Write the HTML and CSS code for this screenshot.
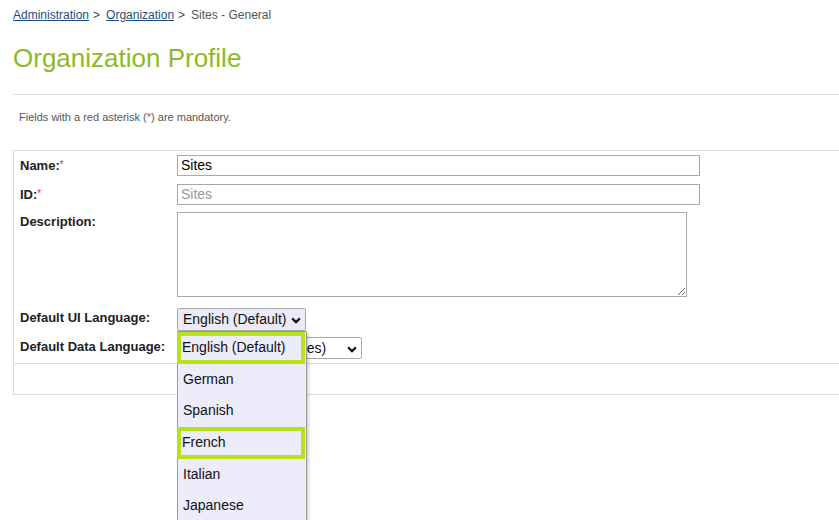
FILE: index.html
```html
<!DOCTYPE html>
<html>
<head>
<meta charset="utf-8">
<link rel="stylesheet" href="styles.css">
</head>
<body>
<div class="page">
  <div class="crumbs"><a href="#">Administration</a><span class="sep">&gt;</span><a href="#">Organization</a><span class="sep">&gt;</span><span class="cur">Sites - General</span></div>
  <h1 class="title">Organization Profile</h1>
  <div class="rule"></div>
  <p class="note">Fields with a red asterisk (<span class="req">*</span>) are mandatory.</p>

  <div class="formbox">
    <div class="rows">
      <div class="row r-name">
        <div class="label">Name:<span class="req">*</span></div>
        <div class="field"><div class="input">Sites</div></div>
      </div>
      <div class="row r-id">
        <div class="label">ID:<span class="req">*</span></div>
        <div class="field"><div class="input disabled">Sites</div></div>
      </div>
      <div class="row r-desc">
        <div class="label">Description:</div>
        <div class="field"><textarea class="area"></textarea></div>
      </div>
      <div class="row r-ui">
        <div class="label">Default UI Language:</div>
        <div class="field">
          <div class="select open">English (Default)
            <svg class="chev" width="10" height="7" viewBox="0 0 10 7"><path d="M1.2 1.4 L5 5.2 L8.8 1.4" fill="none" stroke="#111" stroke-width="2.2"/></svg>
          </div>
        </div>
      </div>
      <div class="row r-data">
        <div class="label">Default Data Language:</div>
        <div class="field">
          <div class="select wide"><span class="hidden-part">English (United Stat</span>es)
            <svg class="chev" width="10" height="7" viewBox="0 0 10 7"><path d="M1.2 1.4 L5 5.2 L8.8 1.4" fill="none" stroke="#111" stroke-width="2.2"/></svg>
          </div>
        </div>
      </div>
    </div>
    <div class="footer"></div>

    <ul class="menu">
      <li class="hl">English (Default)</li>
      <li>German</li>
      <li>Spanish</li>
      <li class="hl">French</li>
      <li>Italian</li>
      <li>Japanese</li>
    </ul>
  </div>
</div>
</body>
</html>
```

FILE: styles.css
```css
html, body {
  margin: 0;
  padding: 0;
  background: #fff;
  overflow: hidden;
}
body {
  font-family: "Liberation Sans", Arial, sans-serif;
  color: #222;
  width: 839px;
  height: 520px;
}
.page {
  padding-left: 13px;
}
.crumbs {
  padding-top: 8px;
  font-size: 12px;
  line-height: 15px;
  color: #555;
}
.crumbs a {
  color: #1d4f7c;
  text-decoration: underline;
}
.crumbs .sep {
  color: #444;
  margin: 0 6px 0 4px;
}
.title {
  margin: 20px 0 0 0;
  font-size: 26px;
  line-height: 30px;
  font-weight: normal;
  color: #8cba26;
}
.rule {
  margin-top: 21px;
  height: 1px;
  background: #dcdcdc;
}
.note {
  margin: 16px 0 0 6px;
  font-size: 11px;
  line-height: 13px;
  color: #555;
}
.req {
  color: #d0393a;
}
.label .req {
  font-size: 10px;
  vertical-align: 2px;
  font-weight: normal;
}
.formbox {
  position: relative;
  margin-top: 26px;
  border-top: 1px solid #dcdcdc;
  border-left: 1px solid #dcdcdc;
  border-bottom: 1px solid #dcdcdc;
  height: 243px;
}
.rows {
  padding: 4px 0 4px 6px;
  border-bottom: 1px solid #dcdcdc;
}
.row {
  display: flex;
}
.label {
  width: 157px;
  font-size: 13px;
  font-weight: bold;
  color: #222;
  line-height: 16px;
  padding-top: 2px;
}
.r-id { margin-top: 8px; }
.r-desc { margin-top: 7px; }
.r-ui { margin-top: 11px; }
.r-data { margin-top: 6px; }
.input {
  box-sizing: border-box;
  width: 523px;
  height: 21px;
  border: 1px solid #a9a9a9;
  font-size: 14px;
  line-height: 19px;
  padding-left: 3px;
  color: #000;
}
.input.disabled {
  color: #9a9a9a;
}
.area {
  display: block;
  box-sizing: border-box;
  width: 510px;
  height: 85px;
  border: 1px solid #a9a9a9;
  margin: 0;
  padding: 0;
  font-family: inherit;
  resize: both;
  background: #fff;
}
.select {
  box-sizing: border-box;
  position: relative;
  width: 129px;
  height: 23px;
  border: 1px solid #a9a9a9;
  border-radius: 2px;
  font-size: 14px;
  line-height: 21px;
  padding-left: 5px;
  color: #111;
  background: #fff;
}
.select.open {
  background: #eaeaf8;
}
.select.wide {
  width: 185px;
  height: 22px;
  line-height: 20px;
}
.hidden-part {
  visibility: hidden;
}
.chev {
  position: absolute;
  right: 4px;
  top: 8px;
}
.footer {
  height: 30px;
}
.menu {
  position: absolute;
  left: 163px;
  top: 180px;
  width: 130px;
  height: 200px;
  margin: 0;
  padding: 0;
  list-style: none;
  background: #ececfb;
  border: 1px solid #9a9a9a;
  box-sizing: border-box;
  box-shadow: 2px 2px 3px rgba(0,0,0,0.18);
}
.menu li {
  box-sizing: border-box;
  height: 31.7px;
  font-size: 14px;
  line-height: 31.7px;
  padding-left: 5px;
  color: #111;
}
.menu li.hl {
  border: 4px solid #b4e31c;
  line-height: 23.7px;
  padding-left: 1px;
  margin: 0 1px 0 -1px;
}
```
